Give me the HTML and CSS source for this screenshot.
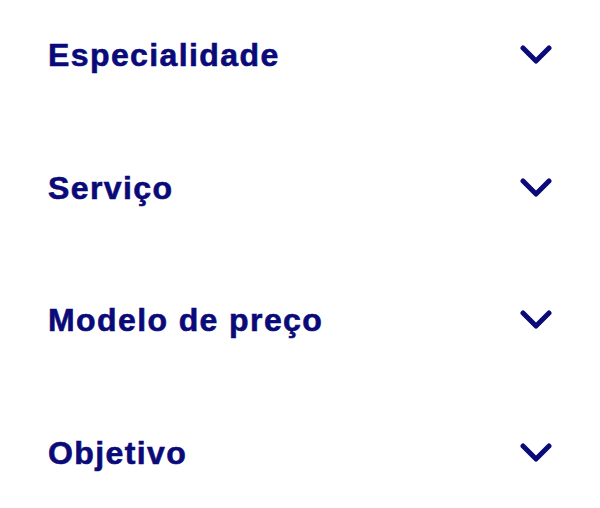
FILE: index.html
```html
<!DOCTYPE html>
<html lang="pt">
<head>
    <meta charset="UTF-8">
    <meta name="viewport" content="width=device-width, initial-scale=1.0">
    <title>Filtros</title>
    <link rel="stylesheet" href="styles.css">
</head>
<body>
    <div class="filters">
        <div class="filter-row">
            <span class="filter-title">Especialidade</span>
            <svg class="chevron" viewBox="0 0 32 20" width="32" height="20"><path d="M3 3 L16 16 L29 3" /></svg>
        </div>
        <div class="filter-row">
            <span class="filter-title">Serviço</span>
            <svg class="chevron" viewBox="0 0 32 20" width="32" height="20"><path d="M3 3 L16 16 L29 3" /></svg>
        </div>
        <div class="filter-row">
            <span class="filter-title">Modelo de preço</span>
            <svg class="chevron" viewBox="0 0 32 20" width="32" height="20"><path d="M3 3 L16 16 L29 3" /></svg>
        </div>
        <div class="filter-row">
            <span class="filter-title">Objetivo</span>
            <svg class="chevron" viewBox="0 0 32 20" width="32" height="20"><path d="M3 3 L16 16 L29 3" /></svg>
        </div>
    </div>
</body>
</html>
```

FILE: styles.css
```css
body {
    margin: 0;
    background: #ffffff;
    font-family: 'Liberation Sans', Arial, sans-serif;
}

.filters {
    display: flex;
    flex-direction: column;
    padding: 35px 48px 0 48px;
}

/* each filter: title on the left, chevron on the right */
.filter-row {
    display: flex;
    justify-content: space-between;
    align-items: flex-start;
    height: 132.7px;
}

.filter-row:last-child {
    height: auto;
}

.filter-title {
    font-size: 32px;
    font-weight: 700;
    letter-spacing: 1.4px;
    -webkit-text-stroke: 0.6px #0a0a78;
    color: #0a0a78;
    line-height: 40px;
}

.chevron {
    margin-top: 10px;
    fill: none;
    stroke: #0a0a78;
    stroke-width: 5;
    stroke-linecap: round;
    stroke-linejoin: round;
}
```
